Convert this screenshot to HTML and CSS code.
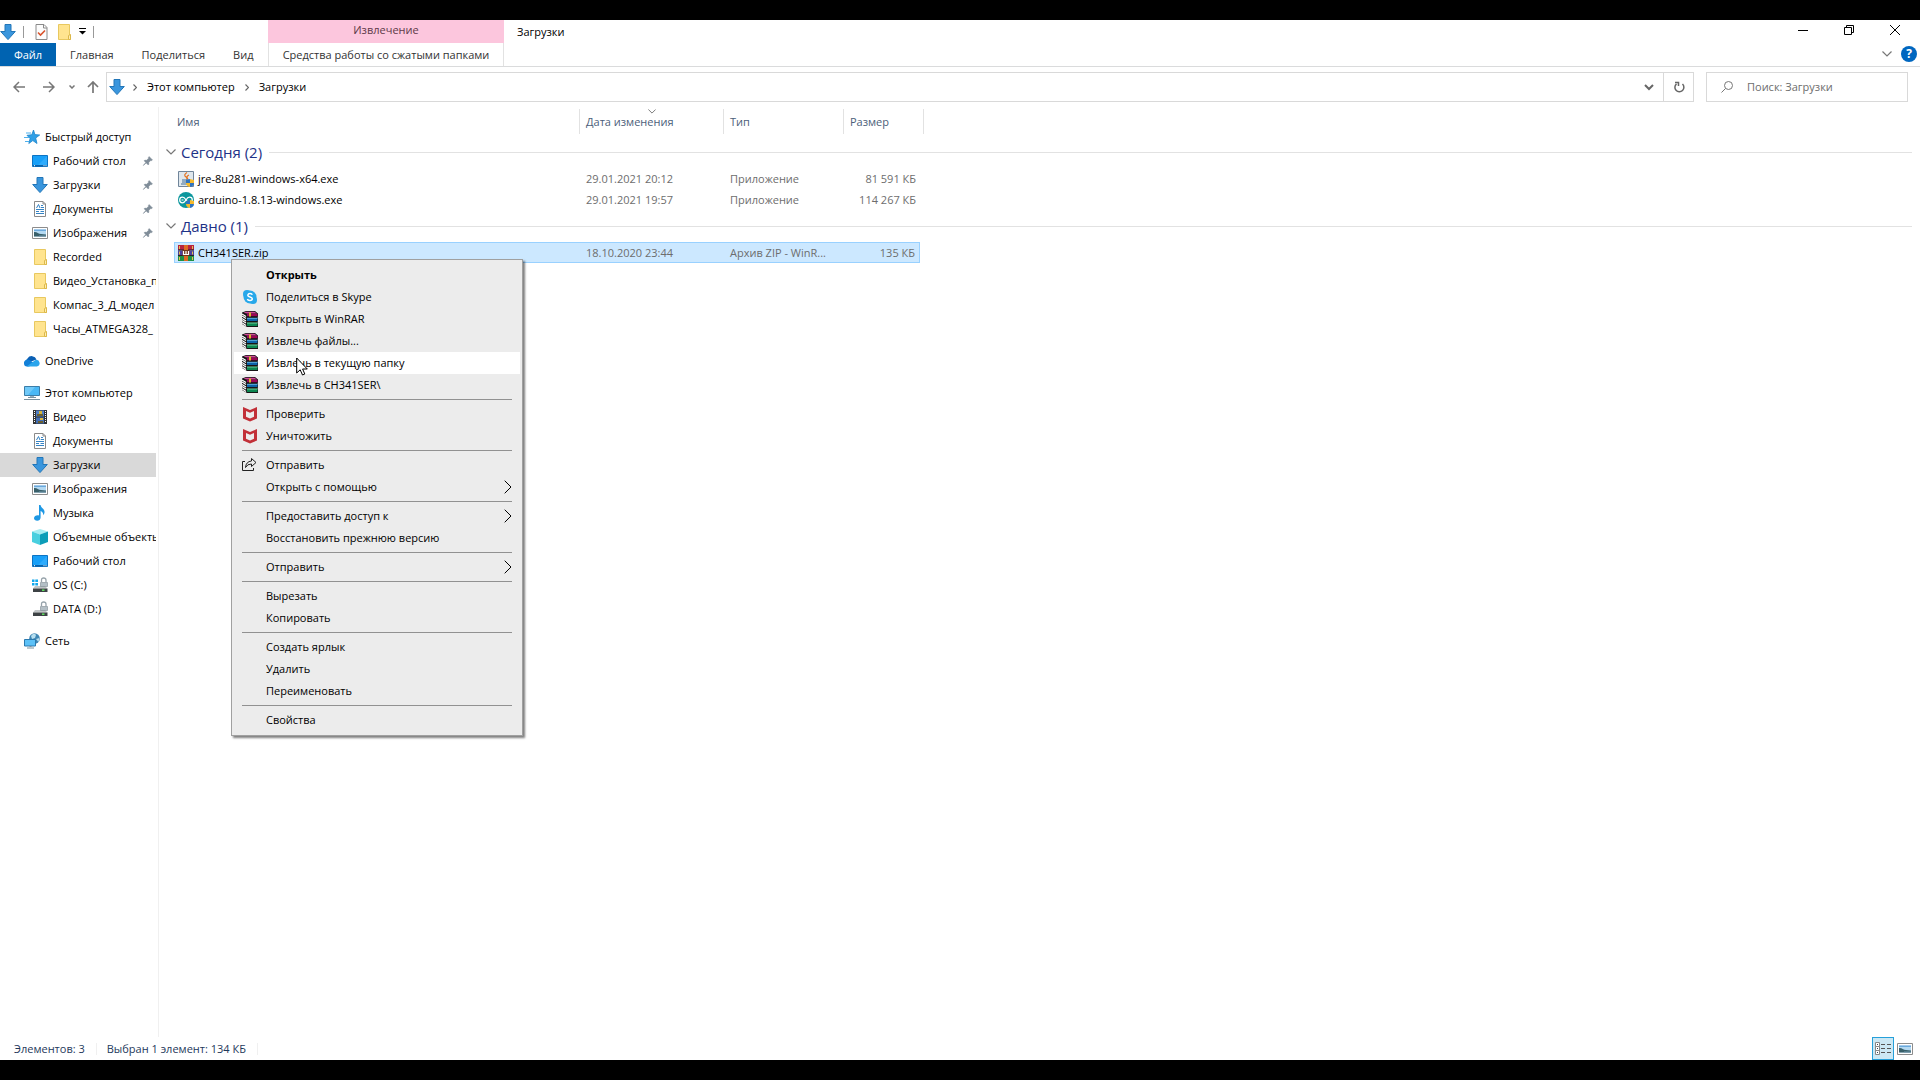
FILE: index.html
```html
<!DOCTYPE html>
<html lang="ru">
<head>
    <meta charset="utf-8">
    <title>Загрузки</title>
    <link rel="stylesheet" href="styles.css">
</head>
<body>
    <!-- Icon set -->
    <svg class="sprite" aria-hidden="true">
        <symbol id="i-download" viewBox="0 0 16 16">
            <path d="M5 .5h6v7h4.3L8 15.6.7 7.500H5z" fill="#3a96dd" stroke="#2276b8"/>
        </symbol>
        <symbol id="i-folder" viewBox="0 0 16 16">
            <path d="M2.500.5h11v10.500h1v4.500h-12z" fill="#ffe48f" stroke="#e8c85f"/>
            <path d="M12.500 15.500v-4l2-1v5z" fill="#ffedb0" stroke="#dcb84a"/>
        </symbol>
        <symbol id="i-props" viewBox="0 0 16 16">
            <path d="M3 .5h8l3 3v12H3z" fill="#fcfcfc" stroke="#8a8a8a"/>
            <path d="M10.500.5v3.500H14" fill="none" stroke="#8a8a8a"/>
            <path d="M5 8.500 7.500 11 12 6.500" fill="none" stroke="#d9532c" stroke-width="1.600"/>
        </symbol>
        <symbol id="i-star" viewBox="0 0 16 16">
            <path d="M9.500 1l1.400 4.600 4.800.4-4 3 1.300 5.500-4.200-2.900-4 2.900 1.300-4.900L3 6.300l4.800-.6z" fill="#2f9fe6" stroke="#1b84cb" stroke-width=".8"/>
            <path d="M2 4h5M0 8.500h5M1 12.500h4" stroke="#4fb0ec"/>
        </symbol>
        <symbol id="i-desktop" viewBox="0 0 16 16">
            <path d="M.5 2.500h15v11H.5z" fill="#18a0f8" stroke="#0c74c4"/>
            <path d="M1 12h14v1.500H1z" fill="#0a62aa"/>
            <path d="M2 12.700h1m8.500 0h1m1 0h1" stroke="#fff"/>
            <path d="M15 3v9L6 12z" fill="#3db2ff" opacity=".6"/>
        </symbol>
        <symbol id="i-doc" viewBox="0 0 16 16">
            <path d="M2.500.5h8.500l2.500 2.500v12.500h-11z" fill="#fff" stroke="#8a8a8a"/>
            <path d="M11 .5V3h2.500" fill="none" stroke="#8a8a8a"/>
            <path d="M4.500 7 6.500 3.500 8 7M9 4.500h2M9 6.500h3M4 8.500h8M4 10.500h3m1.500 0H12M4 12.500h8" fill="none" stroke="#3583c4"/>
        </symbol>
        <symbol id="i-picture" viewBox="0 0 16 16">
            <path d="M.5 2.500h15v11H.5z" fill="#fff" stroke="#8c8c8c"/>
            <path d="M2 4.500h12v7H2z" fill="#b4d9f2"/>
            <path d="M2 4.500h12v1.500H2z" fill="#6ba9dc"/>
            <path d="M2 7c3-.5 4 2 7 2l5 .5v2H2z" fill="#39606a"/>
            <path d="M7 10.500h7v1H7z" fill="#7197ad"/>
        </symbol>
        <symbol id="i-pin" viewBox="0 0 16 16">
            <path d="M9.500 2 14 6.500l-1.500 1-.8-.3L9 10l.2 2.200-1 1L5.500 10.500 2 14l-.3-.3L5 10 2.800 7.800l1-1L6 7l2.800-2.700-.3-1z" fill="#7f8c98" stroke="#7f8c98" stroke-width=".6"/>
        </symbol>
        <symbol id="i-cloud" viewBox="0 0 16 16">
            <path d="M3 10a3 3 0 0 1 .5-4.500 5 5 0 0 1 9 1z" fill="#0a5fb4"/>
            <path d="M0 10.500a3.500 3.500 0 0 1 5-3.700l6 3.700-6 3H3a3 3 0 0 1-3-3z" fill="#1280d8"/>
            <path d="M2.500 13.500 11.500 7A3.300 3.300 0 0 1 13 13.500z" fill="#2aa5ec"/>
        </symbol>
        <symbol id="i-pc" viewBox="0 0 16 16">
            <path d="M.5 1.500h15v9H.5z" fill="#4ab8f5" stroke="#3b7da8"/>
            <path d="M1 2h10L4 10H1z" fill="#8ad3fa" opacity=".6"/>
            <path d="M6 11h4v1H6z" fill="#9ab0bd"/>
            <path d="M4 12.500h8M0 14.500h16" stroke="#7b929f"/>
        </symbol>
        <symbol id="i-video" viewBox="0 0 16 16">
            <path d="M1 1h14v14H1z" fill="#333"/>
            <path d="M4 1.500h8v6H4z" fill="#4f7fc8"/>
            <path d="M4 8.500h8v6H4z" fill="#426eb4"/>
            <path d="M7 2h3v3H7z" fill="#d6b43a"/>
            <path d="M5 5h6v2H5zM6 12h5v2H6z" fill="#6b6031"/>
            <path d="M8 9h3v2H8z" fill="#e0b840"/>
            <path d="M2.500 2v12M13.500 2v12" stroke="#fff" stroke-dasharray="1 1"/>
        </symbol>
        <symbol id="i-music" viewBox="0 0 16 16">
            <path d="M7 0h1.500c.5 3 4.500 4 4 7.500-.1 1-.6 2-1.300 2.700C11.500 8 10 6.500 8.600 6v6.500c0 2-1.600 3.300-3.400 3.300C3.500 15.800 2 14.900 2 13.300c0-2.100 2.700-3.500 5-2.800z" fill="#1e98e4"/>
        </symbol>
        <symbol id="i-cube" viewBox="0 0 16 16">
            <path d="M8 0l8 2.500-8 3-8-3z" fill="#a5edf2"/>
            <path d="M0 2.500l8 3V16l-8-3z" fill="#49cfdf"/>
            <path d="M16 2.500l-8 3V16l8-3z" fill="#0c9db8"/>
        </symbol>
        <symbol id="i-drive" viewBox="0 0 16 16">
            <path d="M3 9h10l2.500 2.500H1z" fill="#c0c4c6"/>
            <path d="M1 11.500h14.500V15H1z" fill="#3d4245"/>
            <path d="M10 13.200h2.500" stroke="#5fe35f" stroke-width="1.500"/>
            <path d="M8.500 5.500h7v4h-7z" fill="#b4bfc6" stroke="#7d8990" stroke-width=".6"/>
            <path d="M9.500 5V3q0-2 2.200-2T14 3v2.500" fill="none" stroke="#97a3ab" stroke-width="1.300"/>
        </symbol>
        <symbol id="i-osdrive" viewBox="0 0 16 16">
            <use href="#i-drive"/>
            <path d="M0 2.500h2.500V5H0zM3.300 2.500H6V5H3.300zM0 6h2.500v2.500H0zM3.300 6H6v2.500H3.300z" fill="#12a8ec"/>
        </symbol>
        <symbol id="i-network" viewBox="0 0 16 16">
            <circle cx="10.500" cy="5.500" r="5.300" fill="#3f86b4"/>
            <path d="M7 3q3-4 5-1l-1 3-3 1zM12 6l3.500-1-1 4z" fill="#b7dff0"/>
            <path d="M.5 6.500h11v6.500H.5z" fill="#5cc1f7" stroke="#2b79ae"/>
            <path d="M3 15h7M5.500 13.500h2" stroke="#7b929f"/>
        </symbol>
        <symbol id="i-shield" viewBox="0 0 8 8">
            <path d="M0 1 4 0v4H0zM4 4h4q0 3-4 4z" fill="#2f74c0"/>
            <path d="M4 0l4 1v3H4zM0 4h4v4Q0 7 0 4z" fill="#f5b92c"/>
        </symbol>
        <symbol id="i-java" viewBox="0 0 16 16">
            <path d="M.5.5h15v15H.5z" fill="#dfe7ed" stroke="#70859a"/>
            <path d="M9 1.500q-4 2.500-1 4.500t0 2M11 4q-3.500 1.500-1 4" fill="none" stroke="#e5711c" stroke-width="1.200"/>
            <path d="M4 9h7M4 11h6M3 13h7" stroke="#436f97"/>
            <use href="#i-shield" x="8" y="8" width="8" height="8"/>
        </symbol>
        <symbol id="i-arduino" viewBox="0 0 16 16">
            <circle cx="8" cy="8" r="8" fill="#0b979d"/>
            <path d="M8 8C6.500 5.500 5.500 5.200 4.500 5.200a2.800 2.800 0 0 0 0 5.600C5.500 10.800 6.500 10.500 8 8s2.500-2.800 3.500-2.800a2.800 2.800 0 0 1 0 5.600C10.500 10.800 9.500 10.500 8 8z" fill="none" stroke="#fff" stroke-width="1.300"/>
            <path d="M3.500 8h2" stroke="#fff"/>
            <use href="#i-shield" x="8" y="8" width="8" height="8"/>
        </symbol>
        <symbol id="i-zip" viewBox="0 0 16 16">
            <path d="M0 0h16v5H0z" fill="#b8243f"/>
            <path d="M0 5.500h16v5H0z" fill="#4c3f9c"/>
            <path d="M0 11h16v5H0z" fill="#1f9146"/>
            <path d="M0 5h16M0 10.500h16" stroke="#26202c"/>
            <path d="M1.500 1v3M1.500 6.500v3M1.500 12v3M14.500 1v3M14.500 6.500v3M14.500 12v3" stroke="#e5bc50"/>
            <path d="M6 0h4v16H6z" fill="#de6a24"/>
            <path d="M4.500 5h7v6h-7z" fill="#73351b"/>
            <path d="M5.500 6v3.500h5V6M8 6v3" fill="none" stroke="#fff" stroke-width="1.200"/>
        </symbol>
        <symbol id="i-skype" viewBox="0 0 16 16">
            <circle cx="5" cy="5" r="4" fill="#28a8ea"/>
            <circle cx="11" cy="11" r="4" fill="#28a8ea"/>
            <circle cx="8" cy="8" r="6.500" fill="#28a8ea"/>
            <path d="M10.300 5.800Q9.800 4.500 8 4.500T5.800 6.200Q5.800 7.500 8 8t2.300 1.800q0 1.700-2.300 1.700t-2.600-1.500" fill="none" stroke="#fff" stroke-width="1.500"/>
        </symbol>
        <symbol id="i-rar" viewBox="0 0 16 16">
            <path d="M0 1.500 4 0h9l3 2.500v3L15.500 6l.5 1v3.500l-.5.5.5 1v4H5L0 13z" fill="#151515"/>
            <path d="M1.500 1.700 4 .8h8.500L15 2.500H5z" fill="#d04a98"/>
            <path d="M5 2.700h10.500v2.500H5z" fill="#9c0656"/>
            <path d="M5 7.300h10.500v2.700H5z" fill="#0b62a8"/>
            <path d="M5 7.300h10.500" stroke="#5fb4ea"/>
            <path d="M5 12h10.500v3H5z" fill="#0c8650"/>
            <path d="M5 12h10.500" stroke="#6bd49d"/>
            <path d="M0 3l4 2.500M0 5l4 2.500M0 7.500 4 10M0 9.500 4 12M0 11.700l4 2.800" stroke="#fff" stroke-width="1.200"/>
            <path d="M7 1.500h2v4H7z" fill="#d9b62c"/>
        </symbol>
        <symbol id="i-mcafee" viewBox="0 0 16 16">
            <path d="M1 1l7 3 7-3v11.500L8 15.500l-7-3zM4 5v5.800l4 1.700 4-1.700V5L8 6.800z" fill="#c23038" fill-rule="evenodd"/>
        </symbol>
        <symbol id="i-share" viewBox="0 0 16 16">
            <path d="M3 4.500H.5v9h11V11" fill="none" stroke="#222"/>
            <path d="M9.500 1.500l4.500 4-4.500 4V7Q5.500 6.800 3.500 10.500 4 4.500 9.500 4z" fill="none" stroke="#222"/>
        </symbol>
        <symbol id="i-down" viewBox="0 0 10 6">
            <path d="M.5.500 5 5 9.500.5" fill="none" stroke="currentColor" stroke-width="1.200"/>
        </symbol>
        <symbol id="i-right" viewBox="0 0 8 14">
            <path d="M.7.7 7 7 .7 13.300" fill="none" stroke="currentColor"/>
        </symbol>
    </svg>

    <div class="window">
        <header class="ribbon">
            <div class="ribbon-left">
                <div class="quick">
                    <svg class="icon"><use href="#i-download"/></svg>
                    <i class="bar"></i>
                    <button aria-label="Свойства"><svg class="icon"><use href="#i-props"/></svg></button>
                    <button aria-label="Новая папка"><svg class="icon"><use href="#i-folder"/></svg></button>
                    <button aria-label="Настройка панели"><svg width="7" height="7"><path d="M0 .5h7" stroke="#000"/><path d="M0 3h7L3.500 6.500z"/></svg></button>
                    <i class="bar"></i>
                </div>
                <nav class="tabs">
                    <button class="tab file">Файл</button>
                    <button class="tab">Главная</button>
                    <button class="tab">Поделиться</button>
                    <button class="tab">Вид</button>
                </nav>
            </div>
            <div class="tools">
                <div class="tools-title">Извлечение</div>
                <button class="tab tools-tab">Средства работы со сжатыми папками</button>
            </div>
            <h1>Загрузки</h1>
            <div class="controls">
                <div class="caption">
                    <button aria-label="Свернуть"><svg width="10" height="10"><path d="M0 5.500h10" stroke="#000"/></svg></button>
                    <button aria-label="Восстановить"><svg width="10" height="10"><path d="M.5 2.500h7v7h-7zM2.500 2.500v-2h7v7h-2" fill="none" stroke="#000"/></svg></button>
                    <button aria-label="Закрыть"><svg width="10" height="10"><path d="M0 0l10 10M10 0 0 10" stroke="#000"/></svg></button>
                </div>
                <div class="help">
                    <button aria-label="Развернуть ленту"><svg class="down"><use href="#i-down"/></svg></button>
                    <button class="help-btn" aria-label="Справка">?</button>
                </div>
            </div>
        </header>

        <div class="navbar">
            <button aria-label="Назад"><svg width="12" height="12"><path d="M12 6H1M6 1 1 6l5 5" fill="none" stroke="#777" stroke-width="1.500"/></svg></button>
            <button aria-label="Вперед"><svg width="12" height="12"><path d="M0 6h11M6 1l5 5-5 5" fill="none" stroke="#777" stroke-width="1.500"/></svg></button>
            <button class="recent" aria-label="Последние"><svg width="6" height="4"><path d="M.5.5 3 3 5.500.5" fill="none" stroke="#777" stroke-width="1.500"/></svg></button>
            <button class="up" aria-label="Вверх"><svg width="12" height="12"><path d="M6 12V1M1 6l5-5 5 5" fill="none" stroke="#777" stroke-width="1.700"/></svg></button>
            <div class="address">
                <svg class="icon"><use href="#i-download"/></svg>
                <svg class="crumb" viewBox="0 0 4 7"><path d="M.5.5l3 3-3 3" fill="none" stroke="#666" stroke-width="1.200"/></svg>
                <a href="#">Этот компьютер</a>
                <svg class="crumb" viewBox="0 0 4 7"><path d="M.5.5l3 3-3 3" fill="none" stroke="#666" stroke-width="1.200"/></svg>
                <a href="#">Загрузки</a>
                <button class="drop" aria-label="Предыдущие расположения"><svg width="10" height="7"><path d="M1 1l4 4 4-4" fill="none" stroke="#666" stroke-width="2"/></svg></button>
                <button class="refresh" aria-label="Обновить"><svg width="12" height="12"><path d="M9.500 3A4.500 4.500 0 1 1 3.500 2.800" fill="none" stroke="#666" stroke-width="1.500"/><path d="M2 1.500h3.500V5" fill="none" stroke="#666" stroke-width="1.500"/></svg></button>
            </div>
            <label class="search">
                <svg width="12" height="12"><circle cx="7.500" cy="4.500" r="4" fill="none" stroke="#777"/><path d="M4.500 7.500.5 11.500" stroke="#777"/></svg>
                <input type="text" placeholder="Поиск: Загрузки" aria-label="Поиск: Загрузки">
            </label>
        </div>

        <main class="main">
            <aside class="sidebar">
                <ul>
                    <li class="root"><a href="#"><svg class="icon"><use href="#i-star"/></svg><span>Быстрый доступ</span></a></li>
                    <li><a href="#"><svg class="icon"><use href="#i-desktop"/></svg><span>Рабочий стол</span><svg class="pin"><use href="#i-pin"/></svg></a></li>
                    <li><a href="#"><svg class="icon"><use href="#i-download"/></svg><span>Загрузки</span><svg class="pin"><use href="#i-pin"/></svg></a></li>
                    <li><a href="#"><svg class="icon"><use href="#i-doc"/></svg><span>Документы</span><svg class="pin"><use href="#i-pin"/></svg></a></li>
                    <li><a href="#"><svg class="icon"><use href="#i-picture"/></svg><span>Изображения</span><svg class="pin"><use href="#i-pin"/></svg></a></li>
                    <li><a href="#"><svg class="icon"><use href="#i-folder"/></svg><span>Recorded</span></a></li>
                    <li><a href="#"><svg class="icon"><use href="#i-folder"/></svg><span>Видео_Установка_п</span></a></li>
                    <li><a href="#"><svg class="icon"><use href="#i-folder"/></svg><span>Компас_3_Д_модел</span></a></li>
                    <li><a href="#"><svg class="icon"><use href="#i-folder"/></svg><span>Часы_ATMEGA328_</span></a></li>
                </ul>
                <ul>
                    <li class="root"><a href="#"><svg class="icon"><use href="#i-cloud"/></svg><span>OneDrive</span></a></li>
                </ul>
                <ul>
                    <li class="root"><a href="#"><svg class="icon"><use href="#i-pc"/></svg><span>Этот компьютер</span></a></li>
                    <li><a href="#"><svg class="icon"><use href="#i-video"/></svg><span>Видео</span></a></li>
                    <li><a href="#"><svg class="icon"><use href="#i-doc"/></svg><span>Документы</span></a></li>
                    <li class="current"><a href="#"><svg class="icon"><use href="#i-download"/></svg><span>Загрузки</span></a></li>
                    <li><a href="#"><svg class="icon"><use href="#i-picture"/></svg><span>Изображения</span></a></li>
                    <li><a href="#"><svg class="icon"><use href="#i-music"/></svg><span>Музыка</span></a></li>
                    <li><a href="#"><svg class="icon"><use href="#i-cube"/></svg><span>Объемные объекты</span></a></li>
                    <li><a href="#"><svg class="icon"><use href="#i-desktop"/></svg><span>Рабочий стол</span></a></li>
                    <li><a href="#"><svg class="icon"><use href="#i-osdrive"/></svg><span>OS (C:)</span></a></li>
                    <li><a href="#"><svg class="icon"><use href="#i-drive"/></svg><span>DATA (D:)</span></a></li>
                </ul>
                <ul>
                    <li class="root"><a href="#"><svg class="icon"><use href="#i-network"/></svg><span>Сеть</span></a></li>
                </ul>
            </aside>

            <section class="content">
                <table class="files">
                    <colgroup>
                        <col class="c-name"><col class="c-date"><col class="c-type"><col class="c-size"><col class="c-edge"><col>
                    </colgroup>
                    <thead>
                        <tr>
                            <th>Имя</th>
                            <th class="sorted">Дата изменения<svg class="sort"><use href="#i-down"/></svg></th>
                            <th>Тип</th>
                            <th colspan="2">Размер</th>
                        </tr>
                    </thead>
                    <tbody>
                        <tr class="group">
                            <th colspan="6"><button><svg class="down"><use href="#i-down"/></svg>Сегодня (2)</button></th>
                        </tr>
                        <tr>
                            <td><div class="name"><svg class="icon"><use href="#i-java"/></svg>jre-8u281-windows-x64.exe</div></td>
                            <td>29.01.2021 20:12</td>
                            <td>Приложение</td>
                            <td class="size">81 591 КБ</td>
                        </tr>
                        <tr>
                            <td><div class="name"><svg class="icon"><use href="#i-arduino"/></svg>arduino-1.8.13-windows.exe</div></td>
                            <td>29.01.2021 19:57</td>
                            <td>Приложение</td>
                            <td class="size">114 267 КБ</td>
                        </tr>
                    </tbody>
                    <tbody>
                        <tr class="group">
                            <th colspan="6"><button><svg class="down"><use href="#i-down"/></svg>Давно (1)</button></th>
                        </tr>
                        <tr class="selected">
                            <td><div class="name"><svg class="icon"><use href="#i-zip"/></svg>CH341SER.zip</div></td>
                            <td>18.10.2020 23:44</td>
                            <td>Архив ZIP - WinR...</td>
                            <td class="size">135 КБ</td>
                        </tr>
                    </tbody>
                </table>

                <!-- Context menu of the selected archive -->
                <div class="menu">
                    <button class="default">Открыть</button>
                    <button><svg class="icon"><use href="#i-skype"/></svg>Поделиться в Skype</button>
                    <button><svg class="icon"><use href="#i-rar"/></svg>Открыть в WinRAR</button>
                    <button><svg class="icon"><use href="#i-rar"/></svg>Извлечь файлы...</button>
                    <button class="hover"><svg class="icon"><use href="#i-rar"/></svg>Извлечь в текущую папку
                        <svg class="cursor" viewBox="0 0 12 19"><path d="M.7 1v15l3.500-3.200L6.500 18l2.300-1-2.200-5h4.700z" fill="#fff" stroke="#000"/></svg>
                    </button>
                    <button><svg class="icon"><use href="#i-rar"/></svg>Извлечь в CH341SER\</button>
                    <hr>
                    <button><svg class="icon"><use href="#i-mcafee"/></svg>Проверить</button>
                    <button><svg class="icon"><use href="#i-mcafee"/></svg>Уничтожить</button>
                    <hr>
                    <button><svg class="icon"><use href="#i-share"/></svg>Отправить</button>
                    <button>Открыть с помощью<svg class="more"><use href="#i-right"/></svg></button>
                    <hr>
                    <button>Предоставить доступ к<svg class="more"><use href="#i-right"/></svg></button>
                    <button>Восстановить прежнюю версию</button>
                    <hr>
                    <button>Отправить<svg class="more"><use href="#i-right"/></svg></button>
                    <hr>
                    <button>Вырезать</button>
                    <button>Копировать</button>
                    <hr>
                    <button>Создать ярлык</button>
                    <button>Удалить</button>
                    <button>Переименовать</button>
                    <hr>
                    <button>Свойства</button>
                </div>
            </section>
        </main>

        <footer class="status">
            <span>Элементов: 3</span>
            <span>Выбран 1 элемент: 134 КБ</span>
            <div class="views">
                <button class="active" aria-label="Таблица">
                    <svg width="16" height="14"><path d="M.5.5h4v4h-4zM.5 4.500h4v4h-4zM.5 8.500h4v4h-4z" fill="#fff" stroke="#888"/><path d="M2 2.500h1M2 6.500h1M2 10.500h1" stroke="#345"/><path d="M6 2.500h4m2 0h4M6 6.500h4m2 0h4M6 10.500h4m2 0h4" stroke="#555"/></svg>
                </button>
                <button aria-label="Крупные значки"><svg class="icon"><use href="#i-picture"/></svg></button>
            </div>
        </footer>
    </div>
</body>
</html>
```
FILE: styles.css
```css
* { box-sizing: border-box; }
body {
    margin: 0;
    height: 100vh;
    padding: 20px 0;
    background: #000;
    color: #000;
    font: 11px/16px "Open Sans", "Noto Sans", sans-serif;
}
button, input {
    margin: 0;
    padding: 0;
    border: 0;
    background: none;
    color: inherit;
    font: inherit;
}
button { display: flex; align-items: center; justify-content: center; white-space: nowrap; }
a { color: inherit; text-decoration: none; }
svg { display: block; flex: none; }
.sprite { position: absolute; width: 0; height: 0; }
.icon { width: 16px; height: 16px; }
.down { width: 10px; height: 6px; color: #777; }

.window {
    display: flex;
    flex-direction: column;
    height: 100%;
    background: #fff;
}

/* Title bar and tabs */
.ribbon {
    display: flex;
    height: 47px;
    border-bottom: 1px solid #dadbdc;
}
.ribbon-left { width: 268px; }
.quick {
    display: flex;
    align-items: center;
    gap: 7px;
    height: 23px;
}
.quick .bar { width: 1px; height: 12px; margin-right: 2px; background: #999; }
.tabs { display: flex; height: 23px; }
.tab { padding: 0 14px; height: 23px; color: #333; }
.tab.file { width: 56px; background: #0063b1; color: #fff; }
.tools { width: 236px; }
.tools-title {
    height: 23px;
    background: #fcc6dd;
    color: #5c3a48;
    text-align: center;
    line-height: 20px;
}
.tools-tab {
    width: 100%;
    border: 1px solid #e2e2e2;
    border-width: 0 1px;
}
h1 { margin: 0 0 0 13px; font-size: 11px; font-weight: normal; line-height: 24px; }
.controls { margin-left: auto; }
.caption { display: flex; padding-right: 2px; }
.caption button { width: 46px; height: 20px; }
.help {
    display: flex;
    justify-content: flex-end;
    align-items: center;
    gap: 9px;
    height: 28px;
    padding-right: 3px;
}
.help-btn {
    width: 16px;
    height: 16px;
    border-radius: 50%;
    background: #0067c0;
    color: #fff;
    font-size: 12px;
    font-weight: bold;
}

/* Address bar */
.navbar {
    display: flex;
    align-items: center;
    height: 40px;
    padding: 0 12px 0 4px;
}
.navbar > button { width: 30px; height: 30px; }
.navbar .recent { width: 16px; }
.navbar .up { width: 26px; }
.address {
    display: flex;
    align-items: center;
    flex: 1;
    height: 30px;
    padding-left: 2px;
    border: 1px solid #d9d9d9;
}
.address a { margin-right: 10px; }
.crumb { width: 4px; height: 7px; margin: 0 10px 0 8px; }
.address a + .crumb { margin-left: 0; }
.drop { width: 28px; height: 28px; margin-left: auto; }
.refresh { width: 30px; height: 28px; border-left: 1px solid #d9d9d9; }
.search {
    display: flex;
    align-items: center;
    gap: 14px;
    width: 202px;
    height: 30px;
    margin-left: 12px;
    padding-left: 14px;
    border: 1px solid #d9d9d9;
}
.search input { flex: 1; min-width: 0; outline: 0; }
.search input::placeholder { color: #6d6d6d; opacity: 1; }

.main { display: flex; flex: 1; min-height: 0; }

/* Folder tree */
.sidebar {
    width: 159px;
    padding: 18px 2px 0 0;
    border-right: 1px solid #f0f0f0;
}
.sidebar ul { margin: 0 0 8px; padding: 0; list-style: none; }
.sidebar a {
    display: flex;
    align-items: center;
    gap: 5px;
    height: 24px;
    padding-left: 32px;
    overflow: hidden;
    white-space: nowrap;
}
.sidebar .root a { padding-left: 24px; }
.sidebar .current { background: #d9d9d9; }
.pin { width: 12px; height: 12px; margin: 0 2px 0 auto; }

/* File list */
.content { position: relative; flex: 1; padding: 2px 7px 0 15px; }
.files {
    width: 100%;
    border-collapse: separate;
    border-spacing: 0;
    table-layout: fixed;
}
.c-name { width: 406px; }
.c-date { width: 144px; }
.c-type { width: 120px; }
.c-size { width: 76px; }
.c-edge { width: 4px; }
.files th, .files td { padding: 0 6px; text-align: left; font-weight: normal; white-space: nowrap; }
.files th:first-child { padding-left: 3px; }
.files td:first-child { padding-left: 4px; }
.files thead th {
    position: relative;
    height: 25px;
    border-right: 1px solid #e2e2e2;
    color: #4c607a;
}
.sort { position: absolute; top: 0; left: 68px; width: 8px; height: 5px; color: #777; }
.files td { height: 21px; border: 0 solid #99d1ff; color: #6d6d6d; }
.files .size { padding-right: 4px; text-align: right; }
.name { display: flex; align-items: center; gap: 4px; color: #000; }
.group th { height: 34px; padding-top: 2px; }
tbody + tbody .group th { height: 32px; padding-top: 0; }
.group button {
    gap: 5px;
    width: 100%;
    margin-left: -11px;
    color: #1e3287;
    font-size: 15px;
    line-height: 20px;
}
.group button::after { content: ""; flex: 1; height: 1px; margin: 0 -16px 0 2px; background: #e2e2e2; }
.selected td { background: #cce8ff; border-width: 1px 0; }
.files .selected td:first-child { border-left-width: 1px; padding-left: 3px; }
.selected td:last-child { border-right-width: 1px; }

/* Context menu */
.menu {
    position: absolute;
    top: 152px;
    left: 72px;
    width: 292px;
    padding: 4px 2px;
    border: 1px solid #a0a0a0;
    background: #ececec;
    box-shadow: 2px 2px 2px rgba(0, 0, 0, .5);
}
.menu button {
    position: relative;
    justify-content: flex-start;
    width: 100%;
    height: 22px;
    padding: 0 8px 0 32px;
}
.menu .icon { margin: 0 8px 0 -24px; }
.menu .default { font-weight: bold; }
.menu .hover { background: #fff; }
.menu hr { height: 1px; margin: 3px 8px; border: 0; background: #919191; }
.more { width: 8px; height: 14px; margin-left: auto; }
.cursor { position: absolute; top: 5px; left: 62px; width: 12px; height: 19px; z-index: 1; }

/* Status bar */
.status {
    display: flex;
    align-items: center;
    height: 23px;
    color: #1e395b;
}
.status span { padding: 0 11px 0 10px; border-right: 1px solid #f0f0f0; line-height: 12px; }
.status span:first-child { padding-left: 14px; }
.views { display: flex; margin-left: auto; padding-right: 4px; }
.views button { width: 22px; height: 23px; }
.views .active { border: 1px solid #26a0da; background: #cce8f4; }
```
